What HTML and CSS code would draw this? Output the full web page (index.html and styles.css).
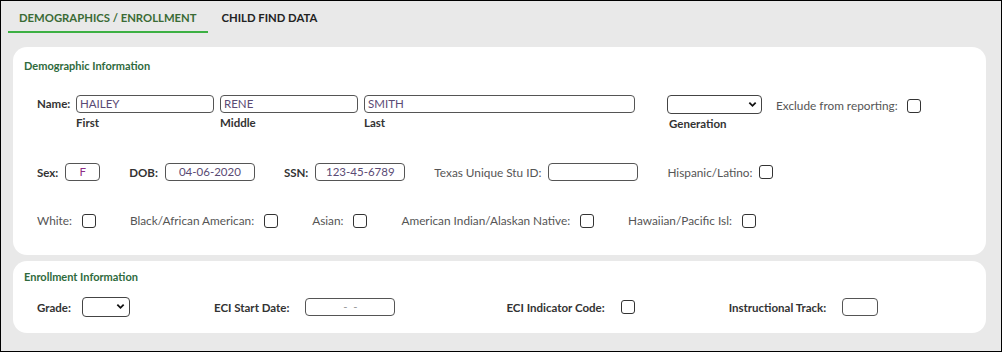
FILE: index.html
```html
<!DOCTYPE html>
<html lang="en">
<head>
    <meta charset="UTF-8">
    <title>Demographics / Enrollment</title>
    <link rel="stylesheet" href="styles.css">
</head>
<body>
    <div class="frame">
        <nav class="tabs">
            <div class="tab active">DEMOGRAPHICS / ENROLLMENT</div>
            <div class="tab">CHILD FIND DATA</div>
        </nav>

        <section class="card demo-card">
            <h3 class="card-title">Demographic Information</h3>

            <div class="row name-row">
                <label class="lbl strong name-lbl">Name:</label>
                <div class="field">
                    <div class="input first">HAILEY</div>
                    <span class="sub">First</span>
                </div>
                <div class="field">
                    <div class="input middle">RENE</div>
                    <span class="sub">Middle</span>
                </div>
                <div class="field">
                    <div class="input last">SMITH</div>
                    <span class="sub">Last</span>
                </div>
                <div class="field gen">
                    <div class="select gen-select">
                        <svg class="chev" viewBox="0 0 10 10"><path d="M1.5 3 L5 6.5 L8.5 3" fill="none" stroke="#111" stroke-width="2"/></svg>
                    </div>
                    <span class="sub">Generation</span>
                </div>
                <div class="group exclude">
                    <label class="lbl">Exclude from reporting:</label>
                    <span class="check"></span>
                </div>
            </div>

            <div class="row info-row">
                <div class="group">
                    <label class="lbl strong">Sex:</label>
                    <div class="input center sex">F</div>
                </div>
                <div class="group">
                    <label class="lbl strong">DOB:</label>
                    <div class="input center date">04-06-2020</div>
                </div>
                <div class="group">
                    <label class="lbl strong">SSN:</label>
                    <div class="input center date">123-45-6789</div>
                </div>
                <div class="group">
                    <label class="lbl">Texas Unique Stu ID:</label>
                    <div class="input date"></div>
                </div>
                <div class="group">
                    <label class="lbl">Hispanic/Latino:</label>
                    <span class="check"></span>
                </div>
            </div>

            <div class="row race-row">
                <div class="group">
                    <label class="lbl">White:</label>
                    <span class="check"></span>
                </div>
                <div class="group">
                    <label class="lbl">Black/African American:</label>
                    <span class="check"></span>
                </div>
                <div class="group">
                    <label class="lbl">Asian:</label>
                    <span class="check"></span>
                </div>
                <div class="group">
                    <label class="lbl">American Indian/Alaskan Native:</label>
                    <span class="check"></span>
                </div>
                <div class="group">
                    <label class="lbl">Hawaiian/Pacific Isl:</label>
                    <span class="check"></span>
                </div>
            </div>
        </section>

        <section class="card enroll-card">
            <h3 class="card-title">Enrollment Information</h3>
            <div class="row enroll-row">
                <div class="group grade">
                    <label class="lbl strong">Grade:</label>
                    <div class="select grade-select">
                        <svg class="chev" viewBox="0 0 10 10"><path d="M1.5 3 L5 6.5 L8.5 3" fill="none" stroke="#111" stroke-width="2"/></svg>
                    </div>
                </div>
                <div class="group eci-date">
                    <label class="lbl strong">ECI Start Date:</label>
                    <div class="input center date blank">- &nbsp;-</div>
                </div>
                <div class="group eci-code">
                    <label class="lbl strong">ECI Indicator Code:</label>
                    <span class="check"></span>
                </div>
                <div class="group track">
                    <label class="lbl strong">Instructional Track:</label>
                    <div class="input track-input"></div>
                </div>
            </div>
        </section>
    </div>
</body>
</html>
```

FILE: styles.css
```css
* {
    box-sizing: border-box;
}

body {
    margin: 0;
    font-family: Lato, "Open Sans", sans-serif;
    font-size: 11.5px;
    color: #333;
}

.frame {
    width: 1002px;
    height: 352px;
    border: 1px solid #000;
    background-color: #e9e9e9;
    padding: 0 0 0 7px;
}

/* tabs */
.tabs {
    display: flex;
    height: 32px;
    align-items: flex-end;
}

.tab {
    font-weight: 700;
    font-size: 11.3px;
    color: #222;
    padding: 0 11px 7px;
    border-bottom: 2px solid transparent;
    margin-right: 3px;
}

.tab.active {
    color: #3a6b35;
    border-bottom-color: #3cb043;
}

/* cards */
.card {
    background-color: #fff;
    border-radius: 14px;
    margin-left: 5px;
    width: 973px;
}

.demo-card {
    margin-top: 14px;
    height: 208px;
    padding: 12px 0 0 11px;
}

.enroll-card {
    margin-top: 6px;
    height: 72px;
    padding: 9px 0 0 11px;
}

.card-title {
    margin: 0;
    font-size: 11px;
    font-weight: 700;
    color: #2f6a3d;
}

.row {
    display: flex;
    align-items: center;
    padding-left: 13px;
}

.lbl {
    color: #555;
    font-size: 11.8px;
    white-space: nowrap;
}

.lbl.strong {
    color: #333;
    font-size: 11.5px;
    font-weight: 700;
}

.group {
    display: flex;
    align-items: center;
    gap: 7px;
}

/* inputs */
.input {
    height: 18px;
    border: 1px solid #555;
    border-radius: 4px;
    background: #fff;
    padding: 0 3px;
    line-height: 16px;
    color: #5a4a74;
    font-size: 11.5px;
}

.input.center {
    text-align: center;
}

.check {
    display: inline-block;
    width: 14px;
    height: 14px;
    border: 1.4px solid #333;
    border-radius: 3px;
    background: #fff;
}

.select {
    position: relative;
    height: 19px;
    border: 1px solid #444;
    border-radius: 4px;
    background: #fff;
}

.chev {
    position: absolute;
    right: 4px;
    top: 4px;
    width: 9px;
    height: 9px;
}

/* name row */
.name-row {
    margin-top: 23px;
    align-items: flex-start;
}

.name-lbl {
    width: 39px;
    line-height: 18px;
}

.field {
    display: flex;
    flex-direction: column;
    margin-right: 6px;
}

.sub {
    font-weight: 700;
    color: #333;
    margin-top: 3px;
}

.first, .middle {
    width: 138px;
}

.last {
    width: 271px;
}

.gen {
    margin-left: 26px;
    margin-right: 14px;
}

.gen-select {
    width: 95px;
}

.gen .sub {
    margin-left: 2px;
}

.exclude {
    margin-top: 3px;
    gap: 9px;
}

/* second row */
.info-row {
    margin-top: 33px;
    gap: 29px;
}

.sex {
    width: 35px;
    color: #8e2c86;
}

.date {
    width: 90px;
}

/* race row */
.race-row {
    margin-top: 32px;
    gap: 34px;
}

.race-row .group {
    gap: 10px;
}

/* enrollment */
.enroll-row {
    margin-top: 14px;
}

.enroll-row .group {
    gap: 16px;
}

.enroll-row .grade {
    gap: 11px;
}

.grade-select {
    width: 48px;
    height: 20px;
}

.eci-date {
    margin-left: 84px;
}

.blank {
    color: #999;
}

.eci-code {
    margin-left: 111px;
}

.track {
    margin-left: 94px;
}

.track-input {
    width: 36px;
}
```
